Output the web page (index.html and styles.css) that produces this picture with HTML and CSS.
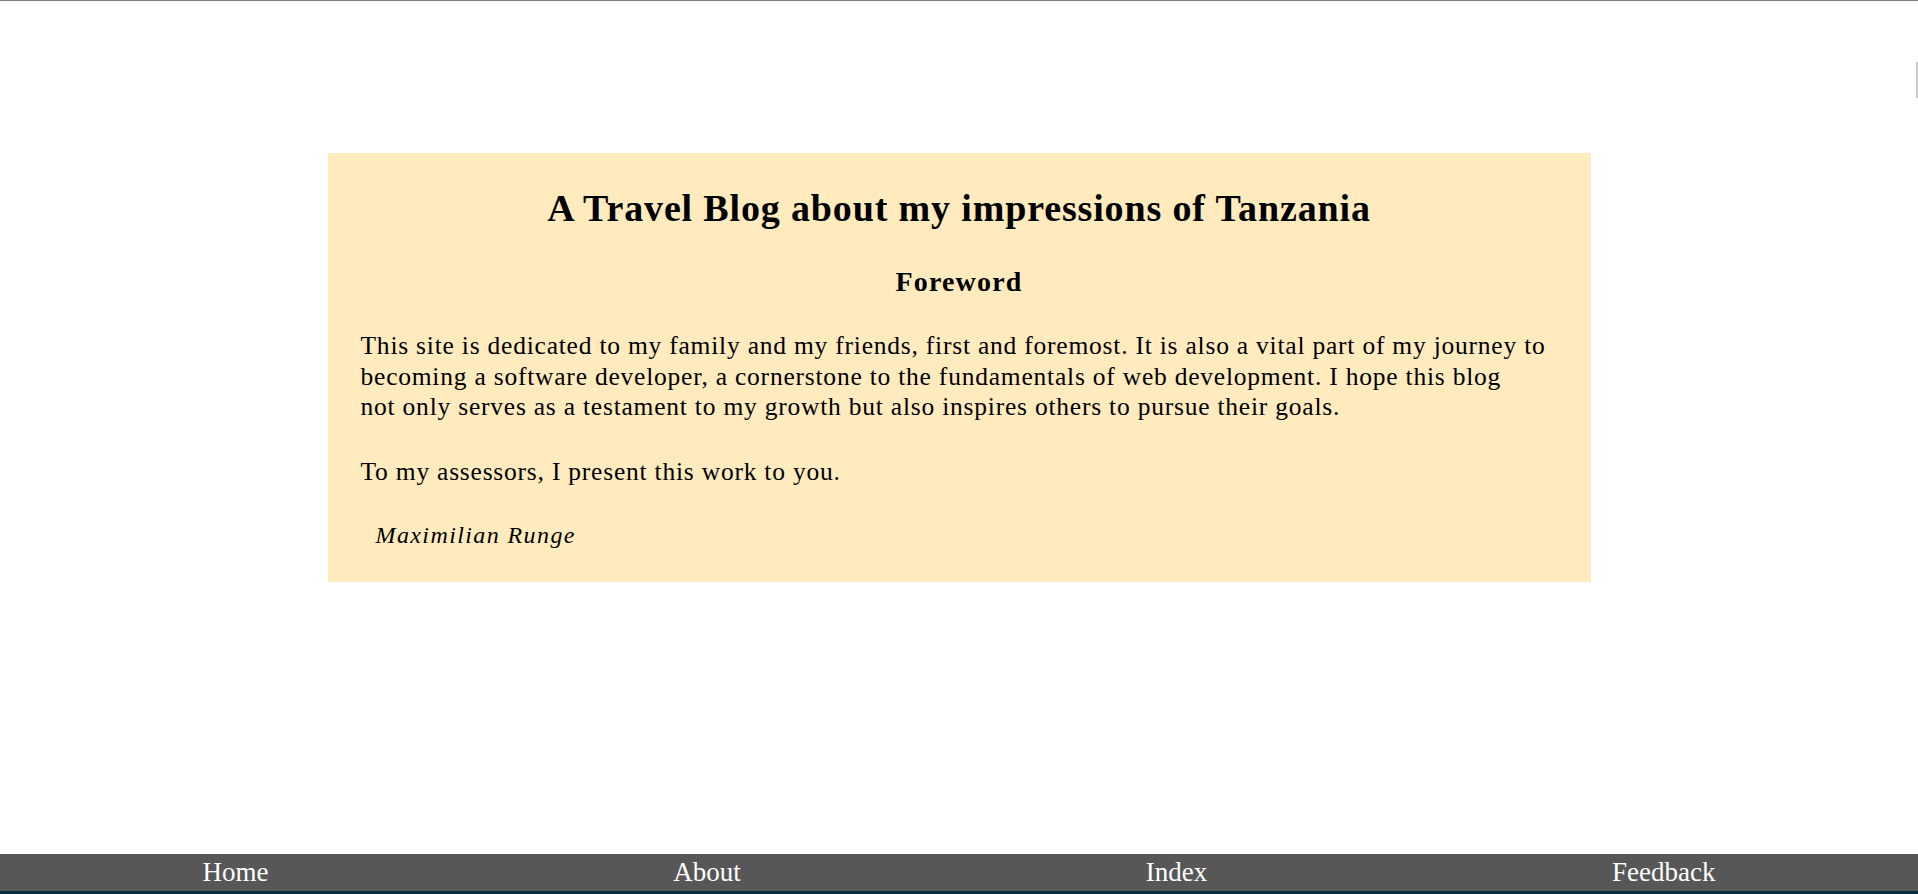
FILE: index.html
```html
<!DOCTYPE html>
<html lang="en">
<head>
<meta charset="utf-8">
<title>A Travel Blog about my impressions of Tanzania</title>
<link rel="stylesheet" href="styles.css">
</head>
<body>
<div class="topline"></div>
<div class="scroll-mark"></div>
<main class="page">
  <section class="foreword">
    <h1 class="title">A Travel Blog about my impressions of Tanzania</h1>
    <h2 class="subtitle">Foreword</h2>
    <p class="text">This site is dedicated to my family and my friends, first and foremost. It is also a vital part of my journey to becoming a software developer, a cornerstone to the fundamentals of web development. I hope this blog<br>not only serves as a testament to my growth but also inspires others to pursue their goals.</p>
    <p class="text text-second">To my assessors, I present this work to you.</p>
    <p class="signature">Maximilian Runge</p>
  </section>
</main>
<nav class="footer-nav">
  <a class="nav-link" href="#">Home</a>
  <a class="nav-link" href="#">About</a>
  <a class="nav-link" href="#">Index</a>
  <a class="nav-link" href="#">Feedback</a>
</nav>
</body>
</html>
```
FILE: styles.css
```css
html, body {
  margin: 0;
  padding: 0;
}

body {
  height: 100vh;
  display: flex;
  flex-direction: column;
  background: #ffffff;
  font-family: "Liberation Serif", "Times New Roman", serif;
  color: #000;
  overflow: hidden;
  position: relative;
}

.topline {
  height: 1px;
  background: #7d7d7d;
  flex: none;
}

.scroll-mark {
  position: absolute;
  right: 0;
  top: 62px;
  width: 2px;
  height: 36px;
  background: #c9c9c9;
}

.page {
  flex: 1;
  padding-top: 152px;
}

.foreword {
  box-sizing: border-box;
  width: 1263px;
  margin: 0 auto;
  background: #ffebbe;
  padding: 32px 33px 33px 33px;
}

.title {
  margin: 0;
  font-size: 38px;
  line-height: 46px;
  font-weight: bold;
  letter-spacing: 0.85px;
  text-align: center;
}

.subtitle {
  margin: 34px 0 0;
  font-size: 28px;
  line-height: 34px;
  font-weight: bold;
  letter-spacing: 1.15px;
  text-align: center;
}

.text {
  margin: 32px 0 0;
  font-size: 25.5px;
  line-height: 30.5px;
  letter-spacing: 0.78px;
}

.text-second {
  margin-top: 34.5px;
}

.signature {
  margin: 33.4px 0 0;
  padding-left: 15px;
  font-size: 24px;
  line-height: 28px;
  letter-spacing: 1.4px;
  font-style: italic;
}

.footer-nav {
  flex: none;
  height: 37px;
  background: #575757;
  border-bottom: 3px solid #0b2e3c;
  display: flex;
  justify-content: space-around;
  align-items: flex-start;
}

.nav-link {
  color: #ffffff;
  text-decoration: none;
  font-size: 27px;
  line-height: 37px;
}
```
